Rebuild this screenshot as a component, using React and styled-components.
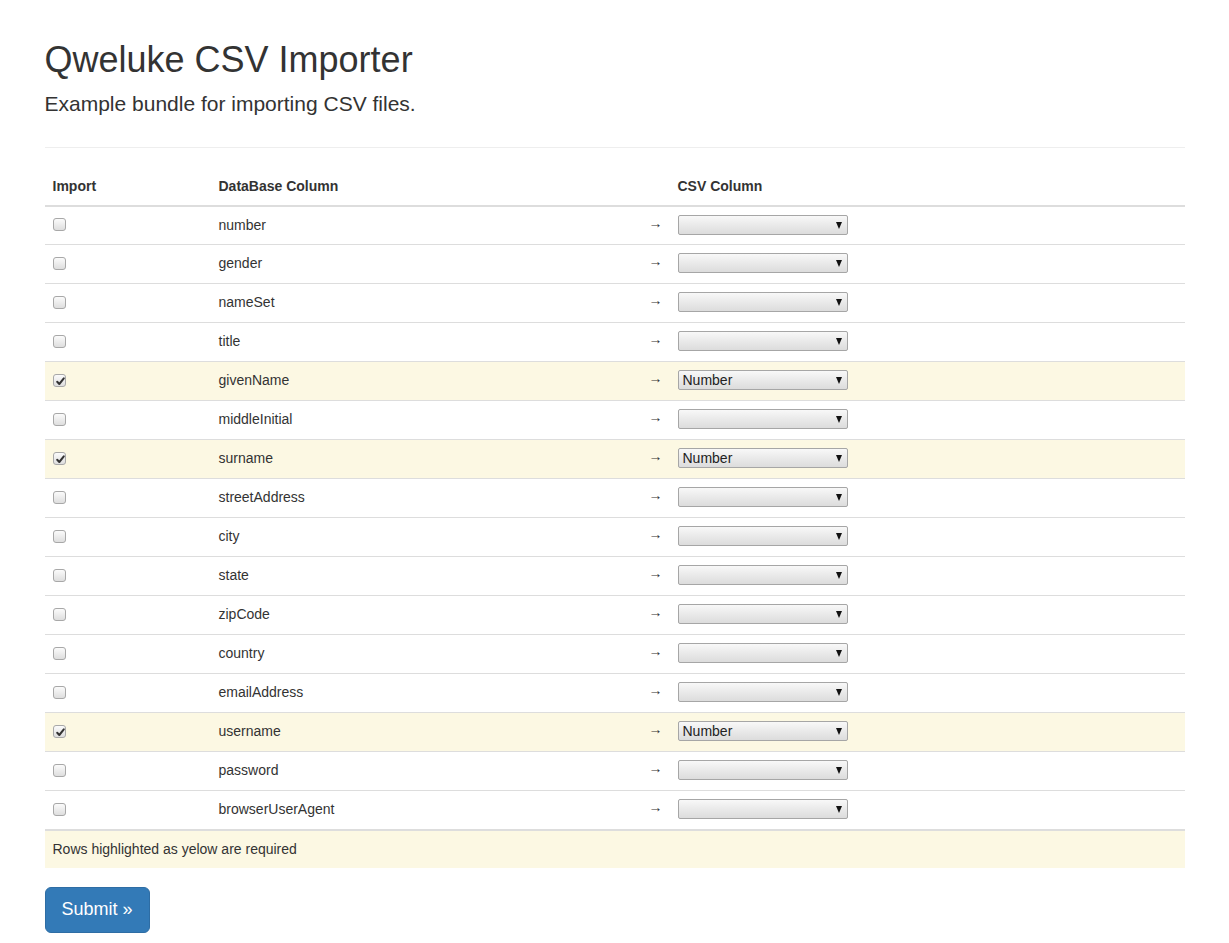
import React from "react";
import styled, { createGlobalStyle } from "styled-components";

const Global = createGlobalStyle`
  html, body { margin: 0; padding: 0; background: #fff; }
  body {
    font-family: "Liberation Sans", Arial, Helvetica, sans-serif;
    font-size: 14px;
    line-height: 1.42857;
    color: #333;
  }
  * { box-sizing: border-box; }
`;

const Container = styled.div`
  width: 1170px;
  margin: 0 auto;
  padding: 0 15px;
`;

const PageHeader = styled.header`
  margin: 40px 0 20px;
  padding-bottom: 9px;
  border-bottom: 1px solid #eee;
`;

const Title = styled.h1`
  margin: 0 0 9px;
  font-size: 36px;
  font-weight: 500;
  line-height: 1.1;
  color: #333;
`;

const Lead = styled.p`
  margin: 0 0 20px;
  font-size: 21px;
  font-weight: 300;
  line-height: 1.4;
`;

const Table = styled.table`
  width: 100%;
  table-layout: fixed;
  border-collapse: collapse;
  border-spacing: 0;
  margin-bottom: 19px;
`;

const Th = styled.th`
  text-align: left;
  font-weight: bold;
  padding: 8px 8px 9px;
  line-height: 20px;
  border-bottom: 2px solid #ddd;
  vertical-align: bottom;
`;

const Row = styled.tr`
  background: ${(p) => (p.$required ? "#fcf8e3" : "transparent")};
`;

const Td = styled.td`
  padding: 0 8px 2px;
  height: 39px;
  border-top: 1px solid #ddd;
  vertical-align: middle;
  line-height: 20px;
`;

const FootCell = styled.td`
  padding: 8px;
  line-height: 20px;
  height: 38px;
  border-top: 2px solid #ddd;
  background: #fcf8e3;
`;

const Arrow = styled.span`
  display: block;
  position: relative;
  top: -2px;
  font-size: 14px;
  line-height: 20px;
  color: #333;
`;

const CheckBox = styled.span`
  display: block;
  width: 13px;
  height: 13px;
  border: 1px solid #a8a8a8;
  border-radius: 3px;
  background: linear-gradient(#fbfbfb, #dedede);
  position: relative;
  svg { position: absolute; left: 1px; top: 1px; }
`;

const SelectBox = styled.span`
  position: relative;
  display: block;
  width: 170px;
  height: 20px;
`;

const Select = styled.select`
  appearance: none;
  -webkit-appearance: none;
  display: block;
  width: 170px;
  height: 20px;
  margin: 0;
  padding: 0 16px 0 4px;
  border: 1px solid #a6a6a6;
  border-radius: 2px;
  background: linear-gradient(#f8f8f8, #dcdcdc);
  font-family: "Liberation Sans", Arial, sans-serif;
  font-size: 14px;
  line-height: 18px;
  color: #222;
  outline: none;
`;

const Caret = styled.span`
  position: absolute;
  right: 6px;
  top: 7px;
  width: 0;
  height: 0;
  border-left: 3.5px solid transparent;
  border-right: 3.5px solid transparent;
  border-top: 7px solid #111;
  pointer-events: none;
`;

const SubmitButton = styled.button`
  display: inline-block;
  padding: 10px 16px;
  font-family: "Liberation Sans", Arial, sans-serif;
  font-size: 18px;
  line-height: 1.3333;
  border-radius: 6px;
  color: #fff;
  background: #337ab7;
  border: 1px solid #2e6da4;
  cursor: pointer;
  margin-bottom: 10px;
`;

const fields = [
  "number", "gender", "nameSet", "title", "givenName", "middleInitial",
  "surname", "streetAddress", "city", "state", "zipCode", "country",
  "emailAddress", "username", "password", "browserUserAgent",
];
const required = new Set(["givenName", "surname", "username"]);

function Check({ checked }) {
  return (
    <CheckBox>
      {checked && (
        <svg width="11" height="11" viewBox="0 0 11 11">
          <path d="M2.2 5.8 L4.3 8 L8.8 2.4" fill="none" stroke="#333" strokeWidth="2" strokeLinecap="round" strokeLinejoin="round" />
        </svg>
      )}
    </CheckBox>
  );
}

function CsvSelect({ value }) {
  return (
    <SelectBox>
      <Select defaultValue={value}>
        <option value=""></option>
        <option value="Number">Number</option>
      </Select>
      <Caret />
    </SelectBox>
  );
}

export default function App() {
  return (
    <>
      <Global />
      <Container>
        <PageHeader>
          <Title>Qweluke CSV Importer</Title>
          <Lead>Example bundle for importing CSV files.</Lead>
        </PageHeader>
        <form onSubmit={(e) => e.preventDefault()}>
          <Table>
            <colgroup>
              <col style={{ width: 166 }} />
              <col style={{ width: 430 }} />
              <col style={{ width: 29 }} />
              <col />
            </colgroup>
            <thead>
              <tr>
                <Th>Import</Th>
                <Th>DataBase Column</Th>
                <Th></Th>
                <Th>CSV Column</Th>
              </tr>
            </thead>
            <tbody>
              {fields.map((f) => {
                const req = required.has(f);
                return (
                  <Row key={f} $required={req}>
                    <Td><Check checked={req} /></Td>
                    <Td>{f}</Td>
                    <Td><Arrow>→</Arrow></Td>
                    <Td><CsvSelect value={req ? "Number" : ""} /></Td>
                  </Row>
                );
              })}
            </tbody>
            <tfoot>
              <tr>
                <FootCell colSpan={4}>Rows highlighted as yelow are required</FootCell>
              </tr>
            </tfoot>
          </Table>
          <SubmitButton type="submit">Submit »</SubmitButton>
        </form>
      </Container>
    </>
  );
}
